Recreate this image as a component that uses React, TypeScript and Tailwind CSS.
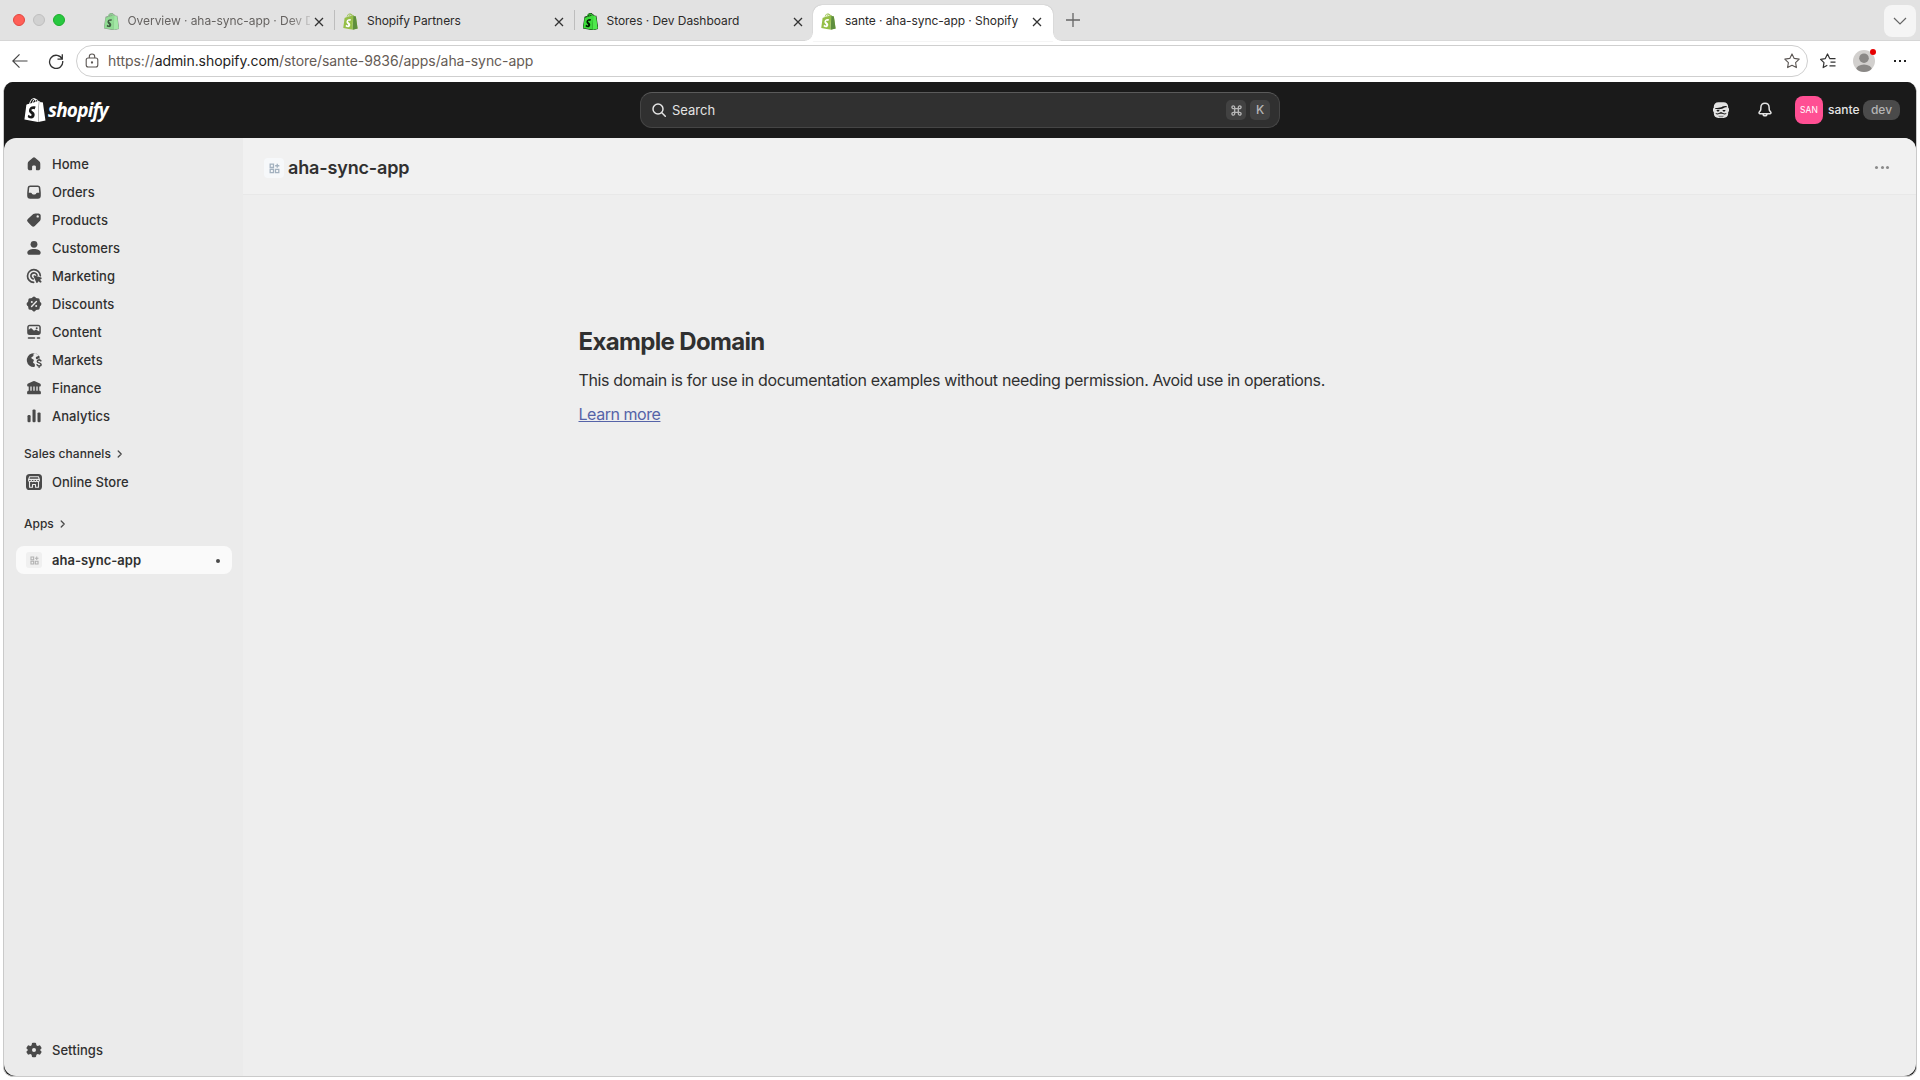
import type { ReactNode } from 'react';
import { SiShopify } from 'react-icons/si';

type IconProps = { children: ReactNode; className?: string };

function Glyph({ children, className = 'size-5' }: IconProps) {
  return (
    <svg viewBox="0 0 20 20" fill="currentColor" className={`${className} shrink-0`}>
      {children}
    </svg>
  );
}

const icons = {
  home: (
    <Glyph>
      <path d="M8.9 3.7a1.7 1.7 0 0 1 2.2 0l4.1 3.6c.7.6 1.1 1.5 1.1 2.5v4.4c0 1.2-.9 2.1-2.1 2.1h-1.300c-.6 0-1-.4-1-1v-2.500c0-.7-.6-1.300-1.300-1.300H9.400c-.7 0-1.300.6-1.300 1.300v2.500c0 .6-.4 1-1 1H5.800c-1.200 0-2.100-.9-2.100-2.100V9.800c0-1 .4-1.900 1.100-2.500z" />
    </Glyph>
  ),
  orders: (
    <Glyph>
      <path
        fillRule="evenodd"
        d="M6.200 3.400h7.600c1.300 0 2.300.9 2.500 2.200l.5 5v3.200a2.900 2.900 0 0 1-2.900 2.900H6.100a2.900 2.900 0 0 1-2.900-2.900v-3.200l.5-5c.2-1.300 1.200-2.200 2.500-2.200zm0 1.500c-.5 0-.9.300-1 .9l-.4 5h2c.5 0 .9.300 1.100.7.300.7.800 1.100 2.100 1.100s1.800-.4 2.100-1.100c.2-.4.600-.7 1.100-.7h2l-.4-5c-.1-.6-.5-.9-1-.9z"
      />
    </Glyph>
  ),
  products: (
    <Glyph>
      <path
        fillRule="evenodd"
        d="M11.400 3.400h3.100c1.200 0 2.200 1 2.200 2.200v3.200c0 .8-.3 1.500-.9 2.100l-5 5a2.200 2.200 0 0 1-3.100 0l-3.900-3.900a2.200 2.200 0 0 1 0-3.100l5.500-4.900c.6-.4 1.300-.6 2.100-.6zm2.300 4.200a1.200 1.200 0 1 0 0-2.400 1.200 1.200 0 0 0 0 2.400z"
      />
    </Glyph>
  ),
  customers: (
    <Glyph>
      <circle cx="10" cy="6.300" r="3.400" />
      <path d="M3.300 14.700c0-2 3.100-3.600 6.700-3.600s6.700 1.600 6.700 3.600c0 1.200-.9 2.100-2.100 2.100H5.400c-1.200 0-2.100-.9-2.100-2.100z" />
    </Glyph>
  ),
  marketing: (
    <Glyph>
      <path
        d="M16.300 9.700a6.400 6.400 0 1 0-6.700 6.700M13 9.200a3.100 3.100 0 1 0-3.900 3.700"
        fill="none"
        stroke="currentColor"
        strokeWidth="1.700"
        strokeLinecap="round"
      />
      <path d="M9.700 9.700c.2-.3.500-.4.900-.3l6.600 2.200c.7.200.7 1.100.1 1.400l-1.300.7 1.400 1.500c.6.600-.7 2-1.400 1.400l-1.600-1.400-.7 1.300c-.3.700-1.200.6-1.400-.1l-2.700-5.900c-.1-.3-.1-.600.1-.8z" />
    </Glyph>
  ),
  discounts: (
    <Glyph>
      <rect x="4.300" y="4.300" width="11.400" height="11.400" rx="1.600" />
      <rect x="4.300" y="4.300" width="11.400" height="11.400" rx="1.600" transform="rotate(45 10 10)" />
      <path d="m7.600 12.400 4.800-4.800" stroke="#ebebeb" strokeWidth="1.400" strokeLinecap="round" />
      <circle cx="7.800" cy="7.900" r="1" fill="#ebebeb" />
      <circle cx="12.200" cy="12.100" r="1" fill="#ebebeb" />
    </Glyph>
  ),
  content: (
    <Glyph>
      <path
        fillRule="evenodd"
        d="M5.700 2.800h8.600c1.400 0 2.500 1.100 2.500 2.500v5.200c0 1.400-1.100 2.500-2.500 2.500H5.700a2.500 2.500 0 0 1-2.500-2.500V5.300c0-1.400 1.100-2.500 2.500-2.500zm0 1.500c-.6 0-1 .4-1 1v2.500l1.400-1.100c.5-.5 1.300-.4 1.800 0L10 8.800l1.300-.8c.4-.3.900-.3 1.300 0l2.700 1.500V5.300c0-.6-.4-1-1-1zm7 3a1 1 0 1 0 0-2 1 1 0 0 0 0 2z"
      />
      <path d="M4.500 15.200h6a.8.8 0 0 1 0 1.600h-6a.8.8 0 0 1 0-1.600zm9 0h2a.8.8 0 0 1 0 1.600h-2a.8.8 0 0 1 0-1.600z" />
    </Glyph>
  ),
  markets: (
    <Glyph>
      <path d="M16 7.300A6.900 6.900 0 1 0 9.900 17c.5 0 1-.4 1-.9v-1.400c0-.5-.3-.9-.7-1.200l-.8-.6c-.4-.3-.5-.8-.2-1.200l.5-.8c.3-.5.1-1-.3-1.300L7.600 8.400c-.4-.3-.4-.8 0-1.100l1.500-1.100c.3-.2.400-.6.4-.9V3.300c2.200 0 4.100 1 5.300 2.500l-2.300 1c-.5.200-.8.700-.7 1.200l.1.600c.1.600.8.900 1.300.6z" />
      <path
        d="M16.900 10.900c-.3-.7-1-.9-1.800-.9-1 0-1.800.5-1.800 1.400 0 2 3.800.9 3.800 3 0 1-.9 1.500-2 1.500-.9 0-1.700-.3-2-1.100M15.100 9v1m0 6v1.200"
        fill="none"
        stroke="currentColor"
        strokeWidth="1.500"
        strokeLinecap="round"
      />
    </Glyph>
  ),
  finance: (
    <Glyph>
      <path d="M9.100 3.200a2 2 0 0 1 1.800 0l5 2.300c.6.300.9.800.9 1.400v.500c0 .6-.5 1-1 1h-.5v4.400h.2c.8 0 1.400.7 1.400 1.500v.9c0 .6-.4 1-1 1H4.100c-.6 0-1-.4-1-1v-.9c0-.8.600-1.500 1.400-1.500h.2V8.400h-.5c-.5 0-1-.4-1-1v-.5c0-.6.300-1.100.9-1.400z" />
      <path d="M7 8.500v4.300M10 8.500v4.300M13 8.500v4.300" stroke="#ebebeb" strokeWidth="1.300" />
    </Glyph>
  ),
  analytics: (
    <Glyph>
      <rect x="3.500" y="9" width="3.100" height="7.300" rx="1.200" />
      <rect x="8.500" y="3.400" width="3.100" height="12.900" rx="1.200" />
      <rect x="13.500" y="6.400" width="3.100" height="9.900" rx="1.200" />
    </Glyph>
  ),
  store: (
    <Glyph>
      <rect x="2" y="2" width="16" height="16" rx="3.600" />
      <g fill="none" stroke="#ebebeb" strokeWidth="1.100" strokeLinejoin="round">
        <path d="M5.600 4.700h8.800l1.100 3.300c0 2.100-2.500 2.100-2.800.3-.3 1.800-2.500 1.800-2.700 0-.2 1.800-2.400 1.800-2.700 0-.3 1.800-2.800 1.800-2.800-.3z" />
        <path d="M4.700 7.400h10.600M5.500 10v5.300h3v-2.800h3v2.800h3V10" />
      </g>
    </Glyph>
  ),
  settings: (
    <Glyph>
      <path
        fillRule="evenodd"
        d="M8.900 2.800h2.200c.5 0 .9.300 1 .8l.3 1.600 1.200.7 1.600-.5c.5-.2 1 0 1.200.5l1 1.700c.3.4.2.9-.2 1.200l-1.200 1.200 1.200 1.200c.4.300.5.8.2 1.200l-1 1.700c-.2.5-.7.7-1.200.5l-1.600-.5-1.200.7-.3 1.600c-.1.500-.5.800-1 .8H8.900c-.5 0-.9-.3-1-.8l-.3-1.600-1.200-.7-1.600.5c-.5.200-1 0-1.200-.5l-1-1.700c-.3-.4-.2-.9.200-1.200L4 10 2.800 8.800c-.4-.3-.5-.8-.2-1.200l1-1.700c.2-.5.700-.7 1.200-.5l1.600.5 1.200-.7.300-1.600c.1-.5.5-.8 1-.8zM10 12a2 2 0 1 0 0-4 2 2 0 0 0 0 4z"
      />
    </Glyph>
  ),
};

const navItems = [
  { label: 'Home', icon: icons.home },
  { label: 'Orders', icon: icons.orders },
  { label: 'Products', icon: icons.products },
  { label: 'Customers', icon: icons.customers },
  { label: 'Marketing', icon: icons.marketing },
  { label: 'Discounts', icon: icons.discounts },
  { label: 'Content', icon: icons.content },
  { label: 'Markets', icon: icons.markets },
  { label: 'Finance', icon: icons.finance },
  { label: 'Analytics', icon: icons.analytics },
];

type BagProps = { front: string; side: string; mark: string; outline?: string };

function Bag({ front, side, mark, outline }: BagProps) {
  return (
    <svg viewBox="1 -0.500 22 25" className="-mt-px h-[17px] w-[15px] shrink-0">
      {outline ? (
        <path
          d="M15.300 24 1.500 21.400 4 5.800l3.500-1.300C8.500 1.500 10.500.2 12 .2c1.300 0 2.300.8 2.900 2.600l1.300-.1 1.600 1.700 2.100.1 2.600 17.900z"
          fill={outline}
          stroke={outline}
          strokeWidth="1.800"
        />
      ) : null}
      <path d="M6 9h7.500v11H5z" fill={mark} />
      <SiShopify size={24} color={front} />
      <path
        d="m15.300 24 7.200-1.600S19.900 4.800 19.900 4.700c0-.1-.1-.2-.2-.2l-1.900-.1-1.500-1.400-.1-.1z"
        fill={side}
      />
    </svg>
  );
}

function CloseIcon() {
  return (
    <svg viewBox="0 0 10 10" className="size-[10px] shrink-0" fill="none" stroke="#333" strokeWidth="1.300">
      <path d="M1 1l8 8M9 1 1 9" />
    </svg>
  );
}

type TabProps = { title: string; icon: ReactNode; active?: boolean; muted?: boolean; separator?: boolean };

function Tab({ title, icon, active, muted, separator }: TabProps) {
  return (
    <div
      className={`relative flex h-9 w-[239.500px] shrink-0 items-center pr-[11px] pb-[3px] pl-2 ${
        active ? '-ml-px z-10 rounded-t-[9px] bg-white shadow-[0_0_1px_#999]' : ''
      }`}
    >
      {icon}
      <span
        className={`mb-[2px] ml-[9px] h-5 w-[182.500px] text-[12px] leading-[20px] tracking-[-0.060px] whitespace-nowrap ${
          muted
            ? 'text-[#666361] [mask-image:linear-gradient(to_right,black_88%,transparent_103%)]'
            : 'text-[#2c2a29]'
        }`}
      >
        {title}
      </span>
      <span className="ml-1">
        <CloseIcon />
      </span>
      {separator ? <span className="absolute top-[5px] right-0 h-5 w-px bg-[#bdbdbd]" /> : null}
      {active ? (
        <>
          <span className="absolute bottom-0 -left-2 size-2 bg-[radial-gradient(circle_at_0_0,#e2e2e2_7.500px,white_8px)]" />
          <span className="absolute -right-2 bottom-0 size-2 bg-[radial-gradient(circle_at_100%_0,#e2e2e2_7.500px,white_8px)]" />
        </>
      ) : null}
    </div>
  );
}

function TabStrip() {
  return (
    <div className="flex h-[41px] shrink-0 items-end bg-[#e2e2e2] shadow-[inset_0_-1px_0_#d6d6d6]">
      <div className="flex h-[41px] w-[95.500px] shrink-0 items-center gap-2 pb-px pl-[13px]">
        <span className="size-3 rounded-full border border-[#e2463f] bg-[#ff5f57]" />
        <span className="size-3 rounded-full border border-[#bfbfbf] bg-[#d1d1d1]" />
        <span className="size-3 rounded-full border border-[#1dad2b] bg-[#28c840]" />
      </div>
      <Tab
        title="Overview · aha-sync-app · Dev D"
        icon={<Bag front="#90dc93" side="#a3e8a6" mark="#3f5c41" outline="#8b9c8c" />}
        muted
        separator
      />
      <Tab title="Shopify Partners" icon={<Bag front="#95bf47" side="#5e8e3e" mark="#fff" />} separator />
      <Tab
        title="Stores · Dev Dashboard"
        icon={<Bag front="#3ddc3b" side="#4fe84d" mark="#001a00" outline="#12300f" />}
      />
      <Tab title="sante · aha-sync-app · Shopify" icon={<Bag front="#95bf47" side="#5e8e3e" mark="#fff" />} active />
      <div className="flex h-[41px] flex-1 items-center justify-between pr-1 pl-[12px]">
        <svg viewBox="0 0 16 16" className="mb-px size-4" fill="none" stroke="#666" strokeWidth="1.300">
          <path d="M8 1v14M1 8h14" />
        </svg>
        <span className="flex size-8 items-center justify-center rounded-lg bg-[#f5f5f5]">
          <svg viewBox="0 0 14 8" className="mt-px h-2 w-[14px]" fill="none" stroke="#666" strokeWidth="1.200">
            <path d="m1 1 6 6 6-6" />
          </svg>
        </span>
      </div>
    </div>
  );
}

function AddressBar() {
  return (
    <div className="flex h-[41px] shrink-0 items-center bg-white pr-[13px] pb-px pl-3">
      <svg viewBox="0 0 16 16" className="size-4" fill="none" stroke="#444" strokeWidth="1.200">
        <path d="M15.500 8H1M7.500 1.300.8 8l6.700 6.700" />
      </svg>
      <svg viewBox="0 0 16 16" className="ml-5 size-4" fill="none" stroke="#333" strokeWidth="1.300">
        <path d="M14.200 6.200A6.600 6.600 0 1 0 14.700 8M14.300 1.200v5H9.500" />
      </svg>
      <div className="ml-3 flex h-8 w-[1732px] items-center rounded-full border border-[#cfcfcf] pr-[7px] pl-[8px]">
        <svg viewBox="0 0 14 16" className="h-4 w-[14px]" fill="none" stroke="#5b5653" strokeWidth="1.100">
          <rect x="1.200" y="5" width="11.600" height="9" rx="2" />
          <path d="M4.300 5V3.700a2.700 2.700 0 0 1 5.400 0V5" />
          <circle cx="7" cy="9.500" r=".6" fill="#5b5653" />
        </svg>
        <span className="ml-[9px] flex-1 text-[14px] leading-5 tracking-[-0.070px] text-[#655b55]">
          https://<span className="text-[#1f1d1c]">admin.shopify.com</span>/store/sante-9836/apps/aha-sync-app
        </span>
        <svg viewBox="0 0 16 16" className="size-4" fill="none" stroke="#5b5653" strokeWidth="1.100" strokeLinejoin="round">
          <path d="m8 .9 2.200 4.500 5 .7-3.600 3.500.8 5L8 12.300l-4.400 2.300.8-5L.8 6.100l5-.7z" />
        </svg>
      </div>
      <svg viewBox="0 0 16 16" className="ml-3 size-4" fill="none" stroke="#333" strokeWidth="1.200" strokeLinejoin="round">
        <path d="M7.300 12.300 3.200 14.600l.8-4.900L.6 6.300l4.700-.7L7.500 1l2.200 4.600M9.500 5.600h6M10.500 9.200h5M9.500 12.800h6" />
      </svg>
      <div className="relative ml-[17px] size-[22px]">
        <svg viewBox="0 0 22 22" className="size-[22px] overflow-hidden rounded-full">
          <rect width="22" height="22" fill="#d2d0ce" />
          <circle cx="11" cy="8.200" r="4.800" fill="#8a8886" />
          <ellipse cx="11" cy="20" rx="8" ry="5.600" fill="#8a8886" />
        </svg>
        <span className="absolute -top-px -right-px size-[6px] rounded-full bg-[#e60000]" />
      </div>
      <div className="ml-[19px] flex gap-[3px]">
        <span className="size-[2px] bg-[#222]" />
        <span className="size-[2px] bg-[#222]" />
        <span className="size-[2px] bg-[#222]" />
      </div>
    </div>
  );
}

function TopBar() {
  return (
    <header className="flex h-14 shrink-0 items-center bg-[#1a1a1a] pr-4 pl-5">
      <div className="flex w-[616px] items-center text-white">
        <SiShopify className="-ml-px mb-px size-[24px]" />
        <span className="ml-px font-['Open_Sans'] text-[19px] leading-6 font-bold italic tracking-[-0.800px]">
          shopify
        </span>
      </div>
      <div className="flex h-9 w-[640px] items-center gap-[3px] rounded-xl border border-[#454545] border-t-[#5a5a5a] bg-[#303030] pr-[9px] pl-[8px]">
        <svg viewBox="0 0 20 20" className="size-5" fill="none" stroke="#e3e3e3" strokeWidth="1.500" strokeLinecap="round">
          <circle cx="9" cy="9" r="5" />
          <path d="m12.800 12.800 3.500 3.500" />
        </svg>
        <span className="flex-1 text-[13px] leading-5 text-[#e3e3e3]">Search</span>
        <kbd className="flex size-5 items-center justify-center rounded-[5px] bg-[#424242]">
          <svg viewBox="0 0 12 12" className="size-[11px]" fill="none" stroke="#b5b5b5" strokeWidth="1.500">
            <path d="M4 4h4v4H4zM4 4H2.600A1.500 1.500 0 1 1 4 2.600zM8 4V2.600A1.500 1.500 0 1 1 9.400 4zM8 8h1.400A1.500 1.500 0 1 1 8 9.400zM4 8v1.400A1.500 1.500 0 1 1 2.600 8z" />
          </svg>
        </kbd>
        <kbd className="ml-px flex size-5 items-center justify-center rounded-[5px] bg-[#424242] font-['Inter'] text-[12px] font-medium text-[#b5b5b5]">
          K
        </kbd>
      </div>
      <div className="flex flex-1 items-center justify-end">
        <svg viewBox="0 0 20 20" className="mr-6 size-5">
          <path
            d="M7.400 2.200h5.200c2.800 0 4.600 1.900 4.600 4.600v.9c.5.200.8.600.8 1.200v1.900c0 .6-.3 1-.8 1.200v1.200c0 2.900-1.900 4.700-4.600 4.700H7.400c-2.700 0-4.600-1.800-4.600-4.700V12c-.5-.2-.8-.6-.8-1.200V8.900c0-.6.300-1 .8-1.200v-.9c0-2.700 1.800-4.600 4.600-4.600z"
            fill="#e3e3e3"
          />
          <path d="M4.300 7.900c2.600.3 5.200 0 7.200-1.300 1.100-.7 2.600-.8 4.200-.5v1.200c-1.600 0-2.400.2-3.400.9-2.200 1-5.200 1.200-8 .9z" fill="#1a1a1a" />
          <path d="M5.600 10h2.800c0 1-.6 1.600-1.400 1.600S5.600 11 5.600 10zm6 0h2.800c0 1-.6 1.600-1.400 1.600s-1.400-.6-1.400-1.600z" fill="#1a1a1a" />
          <path d="M4.500 13.100c1.600.6 2.900.3 4-.4.900-.5 2.100-.5 3 0 1.100.7 2.400 1 4 .4-.2.900-.8 1.400-1.600 1.400-1.300.1-2.300-.7-3.900-.7s-2.600.8-3.900.7c-.8 0-1.400-.5-1.600-1.400z" fill="#1a1a1a" />
          <path d="M7.200 15.800h5.600l-.8 1.400H8z" fill="#8a8a8a" />
        </svg>
        <svg viewBox="0 0 20 20" className="mr-5 size-5" fill="none" stroke="#e3e3e3" strokeWidth="1.500" strokeLinejoin="round">
          <path d="M10 3.300c-2.300 0-4 1.700-4.100 4l-.1 1.900c0 .7-.3 1.300-.7 1.800l-.9 1.100c-.5.700 0 1.600.8 1.600h10c.8 0 1.300-.9.8-1.600l-.9-1.100c-.4-.5-.700-1.100-.7-1.800l-.1-1.900c-.1-2.300-1.800-4-4.100-4z" />
          <path d="M8.100 13.900a1.900 1.900 0 0 0 3.800 0" />
        </svg>
        <span className="flex size-7 items-center justify-center rounded-lg bg-[#ff4f93] text-[8.500px] tracking-[0.100px] text-white">
          SAN
        </span>
        <span className="ml-[5px] w-[35px] text-[12px] leading-5 font-medium text-[#e3e3e3]">sante</span>
        <span className="flex h-5 w-[37px] items-center justify-center rounded-lg bg-[#4a4a4a] text-[12px] font-medium text-[#b5b5b5]">
          dev
        </span>
      </div>
    </header>
  );
}

function Chevron() {
  return (
    <svg viewBox="0 0 6 8" className="h-2 w-[6px]" fill="none" stroke="#4a4a4a" strokeWidth="1.300" strokeLinecap="round" strokeLinejoin="round">
      <path d="m1.200 1 3 3-3 3" />
    </svg>
  );
}

function AppGlyph({ className }: { className: string }) {
  return (
    <svg viewBox="0 0 12 12" className={className} fill="none" stroke="currentColor" strokeWidth="1.400">
      <path d="M1.300 1.300h3.600v3.600H1.300zM1.300 7h3.600v3.600H1.300zM7.100 7h3.600v3.600H7.100zM9 .7v4.500M6.700 3h4.600" />
    </svg>
  );
}

function NavRow({ label, icon }: { label: string; icon: ReactNode }) {
  return (
    <div className="flex h-7 items-center gap-2 pl-2 text-[#4a4a4a]">
      {icon}
      <span className="text-[13px] leading-5 font-[550] tracking-[0.040px] text-[#303030]">{label}</span>
    </div>
  );
}

function Sidebar() {
  return (
    <nav className="flex w-[239px] shrink-0 flex-col bg-[#ebebeb] pt-3 pr-[11px] pb-3 pl-3">
      {navItems.map((item) => (
        <NavRow key={item.label} {...item} />
      ))}
      <div className="mt-[10px] flex h-[27px] items-center gap-[6px] pl-2 text-[12px] font-[550] tracking-[0.050px] text-[#303030]">
        Sales channels
        <Chevron />
      </div>
      <div className="mt-px">
        <NavRow label="Online Store" icon={icons.store} />
      </div>
      <div className="mt-[14px] flex h-7 items-center gap-[6px] pl-2 text-[12px] font-[550] text-[#303030]">
        Apps
        <Chevron />
      </div>
      <div className="mt-2 flex h-7 items-center rounded-lg bg-[#fafafa] pr-3 pl-[10px]">
        <span className="flex size-4 items-center justify-center rounded-[3px] bg-[#f0f0f0] text-[#b0b0b0]">
          <AppGlyph className="size-[9px]" />
        </span>
        <span className="ml-[10px] flex-1 text-[13px] leading-5 font-semibold text-[#303030]">aha-sync-app</span>
        <span className="mt-[2px] size-1 rounded-full bg-[#4a4a4a]" />
      </div>
      <div className="mt-auto">
        <NavRow label="Settings" icon={icons.settings} />
      </div>
    </nav>
  );
}

export default function App() {
  return (
    <div className="flex h-[1080px] w-[1920px] flex-col overflow-hidden bg-white font-['Inter',sans-serif] antialiased">
      <TabStrip />
      <AddressBar />
      <div className="mx-[3px] mb-[3px] flex min-h-0 flex-1 flex-col overflow-hidden rounded-[10px] border-x border-b border-[#cacaca] bg-[#1a1a1a]">
        <TopBar />
        <div className="flex min-h-0 flex-1 overflow-hidden rounded-xl">
          <Sidebar />
          <main className="flex flex-1 flex-col bg-[#eee]">
            <div className="flex h-[57px] shrink-0 items-center border-b border-[#e8e8e8] bg-[#f1f1f1] pt-[3px] pr-[27px] pl-[21px]">
              <span className="mt-px flex size-5 items-center justify-center rounded bg-[#f6f8fa] text-[#a3b1bf]">
                <AppGlyph className="size-[11px]" />
              </span>
              <h1 className="ml-1 flex-1 text-[18px] leading-6 font-semibold tracking-[-0.150px] text-[#303030]">aha-sync-app</h1>
              <div className="flex gap-[2.500px]">
                <span className="size-[3px] rounded-full bg-[#8a8a8a]" />
                <span className="size-[3px] rounded-full bg-[#8a8a8a]" />
                <span className="size-[3px] rounded-full bg-[#8a8a8a]" />
              </div>
            </div>
            <div className="pt-[131px] pl-[335.500px] text-[#303030]">
              <h2 className="text-[24px] leading-8 font-bold tracking-[-0.650px]">Example Domain</h2>
              <p className="mt-[10px] text-[16px] leading-6 tracking-[-0.355px] whitespace-nowrap">
                This domain is for use in documentation examples without needing permission. Avoid use in operations.
              </p>
              <a className="mt-[10px] inline-block text-[16px] leading-6 tracking-[-0.450px] text-[#5563a8] underline">
                Learn more
              </a>
            </div>
          </main>
        </div>
      </div>
    </div>
  );
}
